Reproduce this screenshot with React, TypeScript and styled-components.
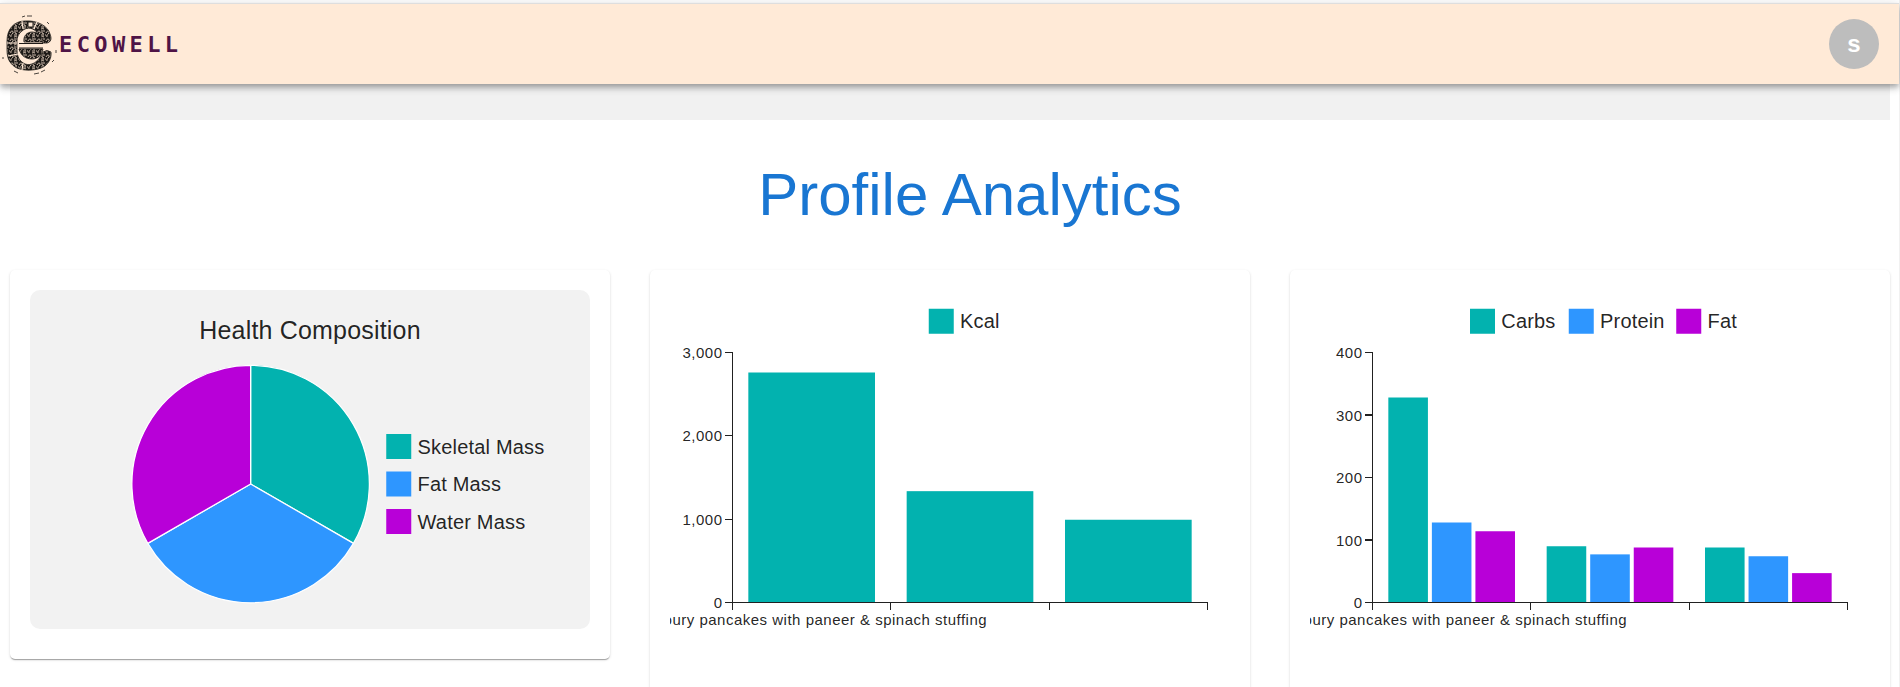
import React from "react";
import styled, { createGlobalStyle } from "styled-components";

const TEAL = "#02b2af";
const BLUE = "#2e96ff";
const PURPLE = "#b800d8";
const TEXT = "rgba(0, 0, 0, 0.87)";

const GlobalStyle = createGlobalStyle`
  * { box-sizing: border-box; }
  body {
    margin: 0;
    background: #fff;
    color: ${TEXT};
    font-family: Arial, "Liberation Sans", sans-serif;
  }
`;

const Page = styled.div`
  height: 100vh;
  display: flex;
  flex-direction: column;
  border-right: 1px solid #f1f1f1;
`;

const AppBar = styled.header`
  position: relative;
  z-index: 1;
  flex: none;
  display: flex;
  align-items: center;
  justify-content: space-between;
  height: 81px;
  margin-top: 3px;
  padding-right: 20px;
  border-top: 1px solid #dedede;
  background: #ffead7;
  box-shadow: 0 3px 5px -1px rgba(0, 0, 0, 0.2), 0 5px 6px rgba(0, 0, 0, 0.14),
    0 1px 12px rgba(0, 0, 0, 0.12);
`;

const Brand = styled.a`
  display: flex;
  align-items: center;
  padding-top: 2px;
  color: #4f1446;
  font: bold 22px/32px "DejaVu Sans Mono", monospace;
  letter-spacing: 0.2em;
  text-decoration: none;
`;

const LogoSvg = styled.svg`
  width: 59px;
  height: 62px;
`;

const Avatar = styled.button`
  width: 50px;
  height: 50px;
  padding: 0;
  border: 0;
  border-radius: 50%;
  background: #bdbdbd;
  color: #fff;
  font: bold 24px/50px Arial, "Liberation Sans", sans-serif;
`;

const Content = styled.main`
  flex: 1;
  min-height: 0;
  overflow-y: auto;
  scrollbar-width: none;
  padding: 0 9px 0 10px;
`;

const Strip = styled.div`
  height: 36px;
  background: #f1f1f1;
`;

const Heading = styled.h1`
  margin: 40px 0;
  padding-left: 40px;
  color: #1976d2;
  font-size: 60px;
  font-weight: 400;
  line-height: 70px;
  text-align: center;
`;

const Cards = styled.div`
  display: grid;
  grid-template-columns: repeat(3, minmax(0, 1fr));
  gap: 40px;
  align-items: start;
`;

const Card = styled.section`
  padding: 20px 20px 30px;
  border-radius: 5px;
  background: #fff;
  box-shadow: 0 2px 1px -1px rgba(0, 0, 0, 0.2), 0 1px 1px rgba(0, 0, 0, 0.14),
    0 1px 3px rgba(0, 0, 0, 0.12);
`;

const Panel = styled.div`
  display: flex;
  flex-direction: column;
  align-items: center;
  padding: 20px;
  border-radius: 10px;
  background: #f2f2f2;
`;

const PanelTitle = styled.h2`
  margin: 0 0 9px;
  font-size: 25px;
  font-weight: 400;
  line-height: 40px;
  letter-spacing: 0.0075em;
`;

const PieSvg = styled.svg`
  display: block;
  width: 400px;
  max-width: 100%;
  height: auto;
  overflow: visible;
`;

const BarSvg = styled.svg`
  display: block;
  width: 100%;
  height: auto;
`;

const LegendText = styled.text`
  fill: ${TEXT};
  font-size: 16px;
  letter-spacing: 0.00938em;
  dominant-baseline: central;
`;

const TickText = styled.text`
  fill: ${TEXT};
  font-size: 12px;
  letter-spacing: 0.03333em;
`;

type LegendItem = { label: string; color: string; x: number; y: number };

const Legend = ({ items }: { items: LegendItem[] }) => (
  <>
    {items.map((item) => (
      <g key={item.label}>
        <rect x={item.x} y={item.y} width="20" height="20" fill={item.color} />
        <LegendText x={item.x + 25} y={item.y + 10}>
          {item.label}
        </LegendText>
      </g>
    ))}
  </>
);

const pieLegend: LegendItem[] = [
  { label: "Skeletal Mass", color: TEAL, x: 221, y: 60 },
  { label: "Fat Mass", color: BLUE, x: 221, y: 90 },
  { label: "Water Mass", color: PURPLE, x: 221, y: 120 },
];

const PieChart = () => {
  const radius = 95;
  const point = (turn: number) => {
    const angle = turn * 2 * Math.PI;
    return `${radius * Math.sin(angle)} ${-radius * Math.cos(angle)}`;
  };
  return (
    <PieSvg viewBox="0 0 320 200" role="img" aria-label="Health Composition">
      <g transform="translate(112.5 100)" stroke="#fff" strokeLinejoin="round">
        {pieLegend.map((slice, i) => (
          <path
            key={slice.label}
            d={`M0 0L${point(i / 3)}A${radius} ${radius} 0 0 1 ${point((i + 1) / 3)}Z`}
            fill={slice.color}
          />
        ))}
      </g>
      <Legend items={pieLegend} />
    </PieSvg>
  );
};

type BarChartProps = {
  name: string;
  legend: LegendItem[];
  groups: number[][];
  max: number;
  step: number;
};

const LEFT = 50;
const TOP = 50;
const BOTTOM = 250;
const BAND = 380 / 3;

const BarChart = ({ name, legend, groups, max, step }: BarChartProps) => {
  const toY = (value: number) => BOTTOM - (value / max) * (BOTTOM - TOP);
  const count = legend.length;
  const barWidth = (BAND * 0.8) / (count + (count - 1) * 0.1);
  const ticks = Array.from({ length: max / step + 1 }, (_, i) => i * step);
  return (
    <BarSvg viewBox="0 0 448 300" role="img" aria-label={name}>
      {groups.map((group, g) =>
        group.map((value, i) => (
          <rect
            key={`${g}-${i}`}
            x={LEFT + BAND * (g + 0.1) + i * barWidth * 1.1}
            y={toY(value)}
            width={barWidth}
            height={BOTTOM - toY(value)}
            fill={legend[i].color}
          />
        ))
      )}
      <g stroke="#212121" shapeRendering="crispEdges">
        <path d={`M${LEFT} ${TOP}V${BOTTOM}H430`} fill="none" />
        {ticks.map((tick) => (
          <path key={tick} d={`M${LEFT - 6} ${toY(tick)}h6`} />
        ))}
        {[0, 1, 2, 3].map((i) => (
          <path key={i} d={`M${LEFT + BAND * i} ${BOTTOM}v6`} />
        ))}
      </g>
      {ticks.map((tick) => (
        <TickText key={tick} x="42" y={toY(tick)} textAnchor="end" dominantBaseline="central">
          {tick.toLocaleString("en-US")}
        </TickText>
      ))}
      <TickText x={LEFT + BAND / 2} y="268" textAnchor="middle">
        Savoury pancakes with paneer &amp; spinach stuffing
      </TickText>
      <Legend items={legend} />
    </BarSvg>
  );
};

const INK = "#1d1a17";

const Logo = () => (
  <LogoSvg viewBox="0 0 59 62" aria-hidden="true">
    <defs>
      <pattern id="carving" width="9" height="8" patternUnits="userSpaceOnUse">
        <rect width="9" height="8" fill={INK} />
        <path
          d="M1 3C2 0 5 1 4 3S1 5 2 7M6 0v3l2 1M5 5h3M5 7q2-1 3 0M7 1h2M0 5h1"
          fill="none"
          stroke="#e2cfbd"
          strokeWidth="0.9"
        />
      </pattern>
    </defs>
    <g fill="url(#carving)" stroke={INK} strokeWidth="0.8" strokeLinejoin="round">
      <path d="M43 29L38 20C35 14 27 12 22 17C17 21 17 25 17 29L17 36C17 42 19 47 25 50C31 52 38 49 43 38Q47 35 51 38C52 45 47 52 41 54C34 57 21 57 15 53C8 48 7 42 7 35V27C7 15 14 7 25 7C37 6 48 12 50 20C52 25 51 28 47 29Z" />
      <path d="M24 28C23 22 27 18 32 18C38 18 43 23 43 28Z" />
      <path d="M19 35H43C42 41 38 45 32 45C26 45 21 42 19 35Z" />
    </g>
    <path d="M18 31.500H44" stroke="#ffead7" strokeWidth="3" />
    <path d="M19 29.500H43M19 34H43" stroke={INK} />
    <g stroke="#ffead7" strokeWidth="1.200" fill="none">
      <path d="M22 7l1 8M37 8l-3 7M7 29h10M8 42l10-2M23 49l-1 7" />
    </g>
    <path d="M28 8h5v5h-5z" fill="#ffead7" stroke={INK} />
    <path
      d="M22 3l3-1M27 2h5M47 8l2 2M3 43v2M14 57l4 2M34 60l5-1M41 58l4-2M52 48l2-2M56 36v3"
      fill="none"
      stroke={INK}
      strokeWidth="0.8"
    />
  </LogoSvg>
);

export default function App() {
  return (
    <Page>
      <GlobalStyle />
      <AppBar>
        <Brand href="#">
          <Logo />
          ECOWELL
        </Brand>
        <Avatar type="button" aria-label="Account">
          s
        </Avatar>
      </AppBar>
      <Content>
        <Strip />
        <Heading>Profile Analytics</Heading>
        <Cards>
          <Card>
            <Panel>
              <PanelTitle>Health Composition</PanelTitle>
              <PieChart />
            </Panel>
          </Card>
          <Card>
            <BarChart
              name="Calories per meal"
              legend={[{ label: "Kcal", color: TEAL, x: 207, y: 15 }]}
              groups={[[2760], [1336], [993]]}
              max={3000}
              step={1000}
            />
          </Card>
          <Card>
            <BarChart
              name="Macronutrients per meal"
              legend={[
                { label: "Carbs", color: TEAL, x: 128, y: 15 },
                { label: "Protein", color: BLUE, x: 207, y: 15 },
                { label: "Fat", color: PURPLE, x: 293, y: 15 },
              ]}
              groups={[
                [328, 128, 114],
                [90, 77, 88],
                [88, 74, 47],
              ]}
              max={400}
              step={100}
            />
          </Card>
        </Cards>
      </Content>
    </Page>
  );
}
